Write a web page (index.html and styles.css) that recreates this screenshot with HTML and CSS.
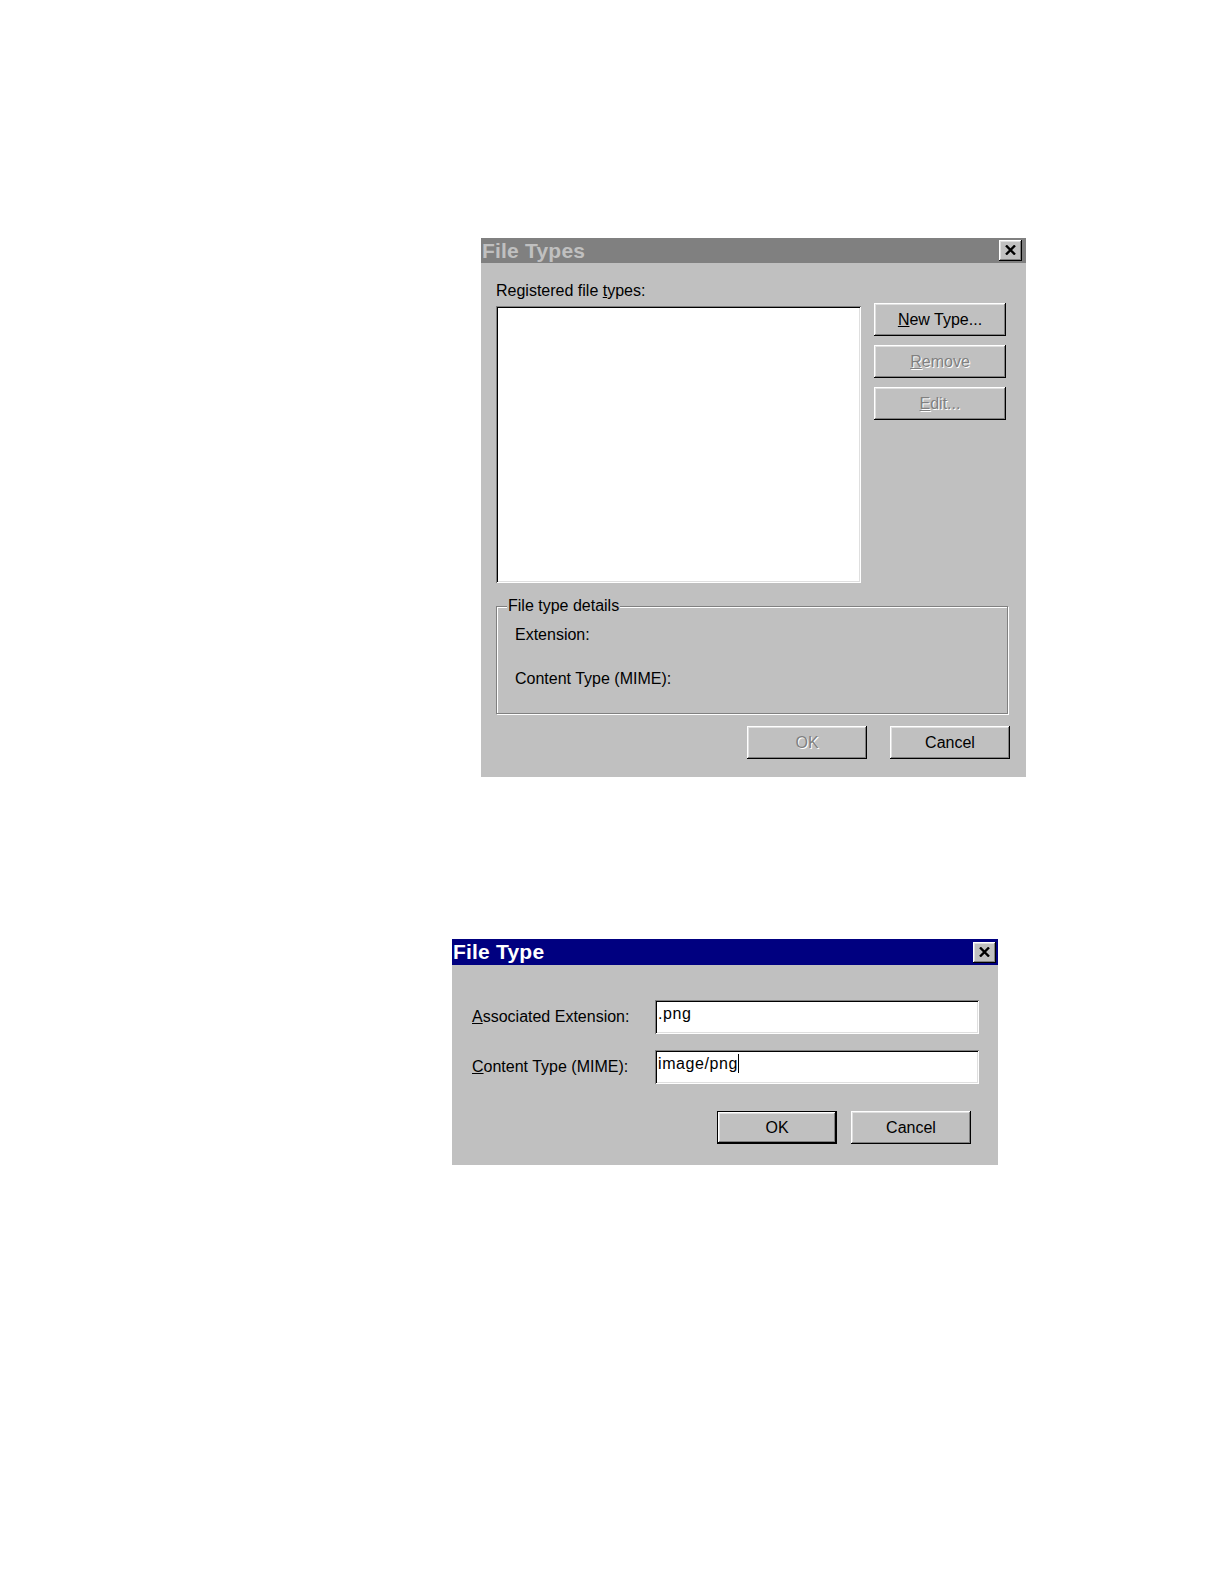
FILE: index.html
```html
<!DOCTYPE html>
<html lang="en">
<head>
<meta charset="utf-8">
<title>File Types</title>
<link rel="stylesheet" href="styles.css">
</head>
<body>
<div class="page">

  <div class="dialog d1">
    <div class="titlebar inactive">
      <span class="title">File Types</span>
      <span class="close"><svg width="11" height="10" viewBox="0 0 11 10"><path d="M1 0.5 L10 9.5 M10 0.5 L1 9.5" stroke="#000" stroke-width="2.4" fill="none"/></svg></span>
    </div>
    <div class="body1">
      <div class="top-row">
        <div class="list-col">
          <div class="label">Registered file <u>t</u>ypes:</div>
          <div class="listbox"></div>
        </div>
        <div class="btn-col">
          <div class="btn side"><span><u>N</u>ew Type...</span></div>
          <div class="btn side disabled"><span><u>R</u>emove</span></div>
          <div class="btn side disabled"><span><u>E</u>dit...</span></div>
        </div>
      </div>
      <fieldset class="group">
        <legend>File type details</legend>
        <div class="detail first">Extension:</div>
        <div class="detail second">Content Type (MIME):</div>
      </fieldset>
      <div class="actions a1">
        <div class="btn act disabled"><span>OK</span></div>
        <div class="btn act"><span>Cancel</span></div>
      </div>
    </div>
  </div>

  <div class="dialog d2">
    <div class="titlebar active">
      <span class="title">File Type</span>
      <span class="close"><svg width="11" height="10" viewBox="0 0 11 10"><path d="M1 0.5 L10 9.5 M10 0.5 L1 9.5" stroke="#000" stroke-width="2.4" fill="none"/></svg></span>
    </div>
    <div class="body2">
      <div class="field-row r1">
        <div class="flabel"><u>A</u>ssociated Extension:</div>
        <div class="input">.png</div>
      </div>
      <div class="field-row r2">
        <div class="flabel"><u>C</u>ontent Type (MIME):</div>
        <div class="input">image/png<span class="caret"></span></div>
      </div>
      <div class="actions a2">
        <div class="btn act default"><span>OK</span></div>
        <div class="btn act"><span>Cancel</span></div>
      </div>
    </div>
  </div>

</div>
</body>
</html>
```

FILE: styles.css
```css
html, body {
  margin: 0;
  padding: 0;
  background: #ffffff;
}

body {
  font-family: "Liberation Sans", Arial, sans-serif;
  font-size: 16px;
  color: #000;
}

.page {
  display: flex;
  flex-direction: column;
  align-items: flex-start;
  width: 1222px;
  height: 1584px;
}

.dialog {
  background: #c0c0c0;
  display: flex;
  flex-direction: column;
  box-sizing: border-box;
}

.d1 {
  margin-left: 481px;
  margin-top: 238px;
  width: 545px;
  height: 539px;
}

.d2 {
  margin-left: 452px;
  margin-top: 162px;
  width: 546px;
  height: 226px;
}

.titlebar {
  height: 25px;
  display: flex;
  align-items: center;
  justify-content: space-between;
  padding: 0 4px 0 1px;
  flex: none;
}

.d2 .titlebar {
  height: 26px;
  padding-right: 2px;
}

.titlebar.inactive {
  background: #808080;
  color: #c0c0c0;
}

.titlebar.active {
  background: #000080;
  color: #ffffff;
}

.title {
  font-family: "Liberation Sans", Arial, sans-serif;
  font-weight: bold;
  font-size: 21px;
  letter-spacing: 0.2px;
}

.close {
  width: 23px;
  height: 21px;
  box-sizing: border-box;
  background: #c0c0c0;
  box-shadow: inset -1px -1px #000, inset 1px 1px #fff, inset -2px -2px #808080, inset 2px 2px #dfdfdf;
  display: flex;
  align-items: center;
  justify-content: center;
  padding-bottom: 1px;
}

/* ---------- dialog 1 ---------- */
.body1 {
  padding: 0 0 0 15px;
}

.top-row {
  display: flex;
  gap: 13px;
  margin-top: 19px;
}

.label {
  line-height: 18px;
  height: 18px;
}

.listbox {
  margin-top: 6px;
  width: 365px;
  height: 277px;
  background: #fff;
  box-shadow: inset 1px 1px #808080, inset -1px -1px #fff, inset 2px 2px #000, inset -2px -2px #dfdfdf;
}

.btn-col {
  display: flex;
  flex-direction: column;
  gap: 9px;
  padding-top: 21px;
}

.btn {
  background: #c0c0c0;
  box-sizing: border-box;
  box-shadow: inset -1px -1px #000, inset 1px 1px #fff, inset -2px -2px #808080, inset 2px 2px #dfdfdf;
  display: flex;
  align-items: center;
  justify-content: center;
  font-size: 16px;
}

.btn.side {
  width: 132px;
  height: 33px;
}

.btn.act {
  width: 120px;
  height: 33px;
}

.btn.disabled {
  color: #808080;
  text-shadow: 1px 1px 0 #fff;
}

.btn.default {
  border: 1px solid #000;
}

.group {
  margin: 14px 0 0 0;
  width: 512px;
  box-sizing: border-box;
  padding: 0 0 25px 18px;
  border: 1px solid #808080;
  box-shadow: 1px 1px 0 #fff, inset 1px 1px 0 #fff;
  min-inline-size: 0;
}

.group legend {
  margin-left: -8px;
  padding: 0 1px;
  line-height: 18px;
  background: #c0c0c0;
}

.detail {
  line-height: 18px;
}

.detail.first {
  margin-top: 11px;
}

.detail.second {
  margin-top: 26px;
}

.actions {
  display: flex;
  justify-content: flex-end;
}

.a1 {
  margin-top: 12px;
  padding-right: 16px;
  gap: 23px;
}

/* ---------- dialog 2 ---------- */
.body2 {
  padding: 35px 19px 0 20px;
}

.field-row {
  display: flex;
  align-items: center;
}

.field-row.r2 {
  margin-top: 16px;
}

.flabel {
  width: 183px;
  flex: none;
}

.input {
  width: 324px;
  height: 34px;
  box-sizing: border-box;
  background: #fff;
  box-shadow: inset 1px 1px #808080, inset -1px -1px #fff, inset 2px 2px #000, inset -2px -2px #dfdfdf;
  padding: 4px 0 0 3px;
  line-height: 20px;
  letter-spacing: 0.6px;
}

.caret {
  display: inline-block;
  width: 1px;
  height: 19px;
  background: #000;
  vertical-align: -4px;
}

.a2 {
  margin-top: 27px;
  padding-right: 8px;
  gap: 14px;
}
```
